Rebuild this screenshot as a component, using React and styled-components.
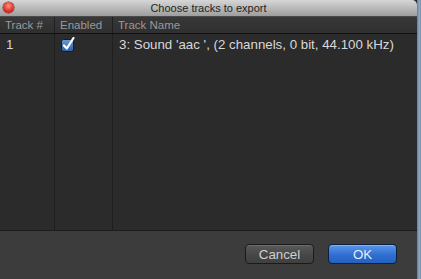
import React from "react";
import styled, { createGlobalStyle } from "styled-components";

const GlobalStyle = createGlobalStyle`
  html, body { margin: 0; padding: 0; }
  body {
    width: 421px;
    height: 279px;
    overflow: hidden;
    font-family: "Liberation Sans", Arial, sans-serif;
  }
  #root { height: 100%; }
`;

const columns = "55px 58px 1fr";

const tracks = [
  { num: "1", enabled: true, name: "3: Sound 'aac ', (2 channels, 0 bit, 44.100 kHz)" },
];

const Checkbox = () => (
  <svg width="14" height="15" viewBox="0 0 14 15">
    <defs>
      <linearGradient id="cb" x1="0" y1="0" x2="0" y2="1">
        <stop offset="0" stopColor="#6f9ad6" />
        <stop offset="1" stopColor="#2c5ea8" />
      </linearGradient>
    </defs>
    <rect x="0.5" y="2.5" width="12" height="12" rx="2" fill="url(#cb)" stroke="#0f1c33" />
    <path d="M3 8.5 L5.8 11.5 L12.5 1" fill="none" stroke="#fff" strokeWidth="2.2" strokeLinecap="round" strokeLinejoin="round" />
  </svg>
);

const App = () => (
  <>
    <GlobalStyle />
    <Screen>
      <Window>
        <TitleBar>
          <CloseDot />
          <Title>Choose tracks to export</Title>
        </TitleBar>
        <Table>
          <HeaderRow>
            <HeadCell>Track #</HeadCell>
            <HeadCell>Enabled</HeadCell>
            <HeadCell last>Track Name</HeadCell>
          </HeaderRow>
          <Body>
            {tracks.map((t) => (
              <Row key={t.num}>
                <Cell>{t.num}</Cell>
                <Cell>{t.enabled && <Checkbox />}</Cell>
                <Cell last>{t.name}</Cell>
              </Row>
            ))}
            <Row fill>
              <Cell />
              <Cell />
              <Cell last />
            </Row>
          </Body>
        </Table>
        <Footer>
          <Button>Cancel</Button>
          <Button primary>OK</Button>
        </Footer>
      </Window>
      <Desktop />
    </Screen>
  </>
);

const Screen = styled.div`
  display: flex;
  height: 100%;
  background: #2a2a2a;
`;

const Window = styled.div`
  width: 417px;
  display: flex;
  flex-direction: column;
  border-top-right-radius: 5px;
  overflow: hidden;
  background: #3b3b3b;
`;

const Desktop = styled.div`
  flex: 1;
  background: linear-gradient(to right, #5f7f9f, #8fa9c2 60%, #6e8cab);
`;

const TitleBar = styled.div`
  height: 16px;
  display: flex;
  align-items: center;
  justify-content: center;
  position: relative;
  background: linear-gradient(#d6d6d6, #b4b4b4 60%, #9d9d9d);
  border-bottom: 1px solid #4a4a4a;
`;

const CloseDot = styled.span`
  position: absolute;
  left: 3px;
  top: 2px;
  width: 11px;
  height: 11px;
  border-radius: 50%;
  background: radial-gradient(circle at 50% 35%, #ff8f85, #e0362c 55%, #9b1a12);
  box-shadow: 0 0 0 0.5px #7a2a24;
`;

const Title = styled.span`
  font-size: 11px;
  color: #1f1f1f;
`;

const Table = styled.div`
  flex: 1;
  display: flex;
  flex-direction: column;
  background: #2b2b2c;
  border-bottom: 1px solid #1c1c1c;
`;

const HeaderRow = styled.div`
  display: grid;
  grid-template-columns: ${columns};
  height: 16px;
  background: linear-gradient(#383838, #2f2f2f);
  border-bottom: 1px solid #111;
`;

const HeadCell = styled.div`
  display: flex;
  align-items: center;
  padding-left: 5px;
  font-size: 11.5px;
  color: #9a9a9a;
  border-right: ${(p) => (p.last ? "none" : "1px solid #202020")};
`;

const Body = styled.div`
  flex: 1;
  display: flex;
  flex-direction: column;
`;

const Row = styled.div`
  display: grid;
  grid-template-columns: ${columns};
  height: ${(p) => (p.fill ? "auto" : "21px")};
  flex: ${(p) => (p.fill ? 1 : "none")};
`;

const Cell = styled.div`
  display: flex;
  align-items: center;
  padding-left: 6px;
  font-size: 13.3px;
  color: #d8d8d8;
  border-right: ${(p) => (p.last ? "none" : "1px solid #1f1f1f")};
  white-space: nowrap;
  overflow: hidden;
`;

const Footer = styled.div`
  height: 48px;
  flex: none;
  display: flex;
  align-items: center;
  justify-content: flex-end;
  gap: 14px;
  padding: 0 20px 2px 0;
  box-sizing: border-box;
  background: #3c3c3c;
`;

const Button = styled.button`
  width: 69px;
  height: 20px;
  border-radius: 4px;
  font-family: "Liberation Sans", Arial, sans-serif;
  font-size: 13.3px;
  padding: 0;
  color: ${(p) => (p.primary ? "#e8eefa" : "#d0d0d0")};
  border: 1px solid ${(p) => (p.primary ? "#0e1f3d" : "#1a1a1a")};
  background: ${(p) =>
    p.primary
      ? "linear-gradient(#5b97ea, #2f6fd0 55%, #2560c0)"
      : "linear-gradient(#595959, #474747 55%, #3f3f3f)"};
  box-shadow: inset 0 1px 0 ${(p) => (p.primary ? "rgba(180,210,255,0.5)" : "rgba(255,255,255,0.12)")};
`;

export default App;
